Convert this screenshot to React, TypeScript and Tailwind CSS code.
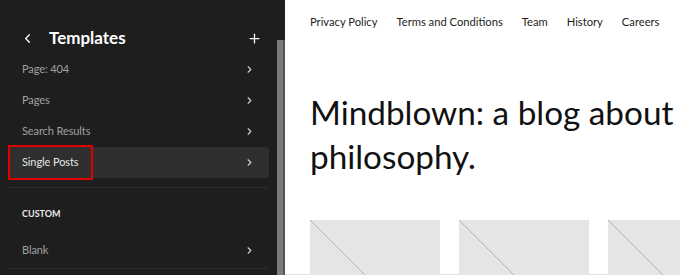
import { ChevronLeft, ChevronRight, Plus } from "lucide-react";

const items = ["Page: 404", "Pages", "Search Results"];

function Row({ label, active = false }: { label: string; active?: boolean }) {
  return (
    <div
      className={`flex h-[31px] items-center justify-between rounded-sm px-[14px] text-[11px] tracking-[-0.1px] ${
        active ? "bg-[#2f2f2f] text-[#e6e6e6]" : "text-[#a0a0a0]"
      }`}
    >
      <span>{label}</span>
      <ChevronRight size={11} strokeWidth={2.4} className="text-[#d0d0d0]" />
    </div>
  );
}

function Placeholder() {
  return (
    <div className="relative h-[60px] w-[130px] shrink-0 overflow-hidden bg-[#e5e5e5]">
      <svg className="absolute inset-0 h-full w-full" viewBox="0 0 130 60" preserveAspectRatio="none">
        <line x1="0" y1="0" x2="130" y2="130" stroke="#b4b4b4" strokeWidth="1" />
      </svg>
    </div>
  );
}

export default function App() {
  return (
    <div
      className="flex h-[275px] w-[680px] overflow-hidden bg-white"
      style={{ fontFamily: 'Lato, "Noto Sans", sans-serif' }}
    >
      <aside className="flex w-[285px] shrink-0 bg-[#1e1e1e]">
        <div className="w-[277px] px-[8px]">
          <div className="flex h-[54px] items-center justify-between pl-[12px] pr-[7px] pt-[22px] text-white">
            <div className="flex items-center gap-[14px]">
              <ChevronLeft size={15} strokeWidth={2} />
              <span className="text-[17px] font-bold">Templates</span>
            </div>
            <Plus size={15} strokeWidth={2} />
          </div>
          <div>
            {items.map((i) => (
              <Row key={i} label={i} />
            ))}
            <div className="relative">
              <Row label="Single Posts" active />
              <div className="absolute -top-[2px] left-0 h-[35px] w-[85px] border-2 border-[#e00000]" />
            </div>
          </div>
          <div className="mt-[9px] border-t border-[#2c2c2c]" />
          <div className="pl-[14px] pt-[19px] text-[9px] font-bold text-[#e8e8e8]">CUSTOM</div>
          <div className="mt-[14px]">
            <Row label="Blank" />
          </div>
          <div className="mt-[2px] border-t border-[#2c2c2c]" />
        </div>
        <div className="flex w-[8px] flex-col pt-[40px]">
          <div className="flex-1 border-r-2 border-[#555] bg-[#7a7a7a]" />
        </div>
      </aside>
      <main className="flex-1 border-b border-r border-[#e2e2e2] pl-[25px]">
        <nav className="flex gap-[19px] pt-[14px] text-[11.2px] text-[#1e1e1e]">
          <span>Privacy Policy</span>
          <span>Terms and Conditions</span>
          <span>Team</span>
          <span>History</span>
          <span>Careers</span>
        </nav>
        <h1 className="mt-[59px] whitespace-nowrap text-[33.3px] leading-[44px] text-[#111]">
          Mindblown: a blog about
          <br />
          philosophy.
        </h1>
        <div className="mt-[42px] flex gap-[19px]">
          <Placeholder />
          <Placeholder />
          <Placeholder />
        </div>
      </main>
    </div>
  );
}
